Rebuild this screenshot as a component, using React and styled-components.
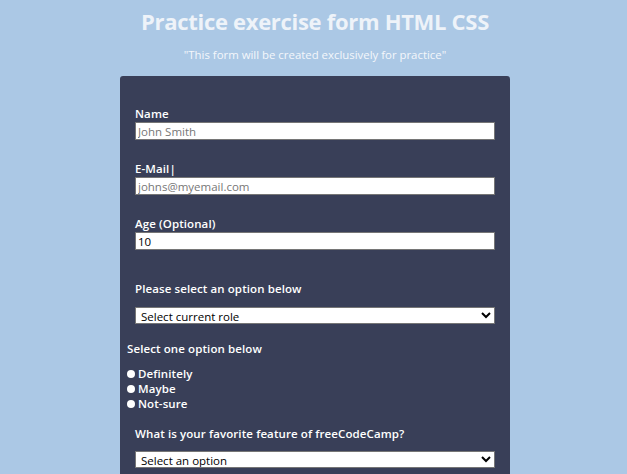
import React from 'react';
import styled, { createGlobalStyle } from 'styled-components';

const GlobalStyle = createGlobalStyle`
  html, body {
    margin: 0;
    padding: 0;
    background: #abc8e5;
    font-family: "Open Sans", "Liberation Sans", sans-serif;
  }
`

const Page = styled.div`
  display: flex;
  flex-direction: column;
  align-items: center;
  padding-left: 3px;
`

const Title = styled.h1`
  margin: 8px 0 0;
  font-size: 22px;
  line-height: 26px;
  font-weight: 700;
  color: #eef3f9;
  letter-spacing: -0.3px;
`

const Subtitle = styled.p`
  margin: 14px 0 0;
  font-size: 11.4px;
  line-height: 14px;
  color: #f4f7fb;
`

const Panel = styled.form`
  box-sizing: border-box;
  width: 390px;
  margin-top: 14px;
  padding: 30px 15px 20px;
  background: #393f58;
  border-radius: 3px;
  color: #ffffff;
`

const Field = styled.div`
  display: flex;
  flex-direction: column;
  margin-top: ${p => p.gap || 0}px;
`

const Label = styled.label`
  display: block;
  font-size: 11.5px;
  line-height: 15px;
  font-weight: 600;
  letter-spacing: 0.1px;
  margin-bottom: ${p => p.below || 1}px;
`

const TextInput = styled.input`
  box-sizing: border-box;
  width: 360px;
  height: 18px;
  margin: 0;
  padding: 0 2px;
  border: 1px solid #767676;
  background: #ffffff;
  font-family: inherit;
  font-size: 11.5px;
  color: #000;
  outline: none;
  &::placeholder {
    color: #777777;
  }
`

const Select = styled.select`
  box-sizing: border-box;
  width: 360px;
  height: 17px;
  margin: 0;
  padding: 0 0 0 1px;
  border: 1px solid #767676;
  border-radius: 0;
  background: #ffffff;
  font-family: inherit;
  font-size: 11.5px;
  color: #000;
`

const RadioGroup = styled.div`
  margin: 17px 0 0 -8px;
`

const RadioTitle = styled.div`
  font-size: 11.5px;
  line-height: 15px;
  font-weight: 600;
  letter-spacing: 0.1px;
  margin-bottom: 10px;
`

const RadioRow = styled.label`
  display: flex;
  align-items: center;
  gap: 3px;
  font-size: 11.5px;
  line-height: 15px;
  font-weight: 600;
  letter-spacing: 0.1px;
`

const Dot = styled.span`
  display: inline-block;
  width: 8px;
  height: 8px;
  border-radius: 50%;
  background: #ffffff;
`

export default function App() {
  return (
    <Page>
      <GlobalStyle />
      <Title>Practice exercise form HTML CSS</Title>
      <Subtitle>"This form will be created exclusively for practice"</Subtitle>
      <Panel onSubmit={e => e.preventDefault()}>
        <Field>
          <Label>Name</Label>
          <TextInput placeholder="John Smith" />
        </Field>
        <Field gap={21}>
          <Label>E-Mail|</Label>
          <TextInput placeholder="johns@myemail.com" />
        </Field>
        <Field gap={21}>
          <Label>Age (Optional)</Label>
          <TextInput defaultValue="10" />
        </Field>
        <Field gap={31}>
          <Label below={11}>Please select an option below</Label>
          <Select defaultValue="role">
            <option value="role">Select current role</option>
          </Select>
        </Field>
        <RadioGroup>
          <RadioTitle>Select one option below</RadioTitle>
          <RadioRow><Dot />Definitely</RadioRow>
          <RadioRow><Dot />Maybe</RadioRow>
          <RadioRow><Dot />Not-sure</RadioRow>
        </RadioGroup>
        <Field gap={15}>
          <Label below={10}>What is your favorite feature of freeCodeCamp?</Label>
          <Select defaultValue="opt">
            <option value="opt">Select an option</option>
          </Select>
        </Field>
      </Panel>
    </Page>
  )
}
